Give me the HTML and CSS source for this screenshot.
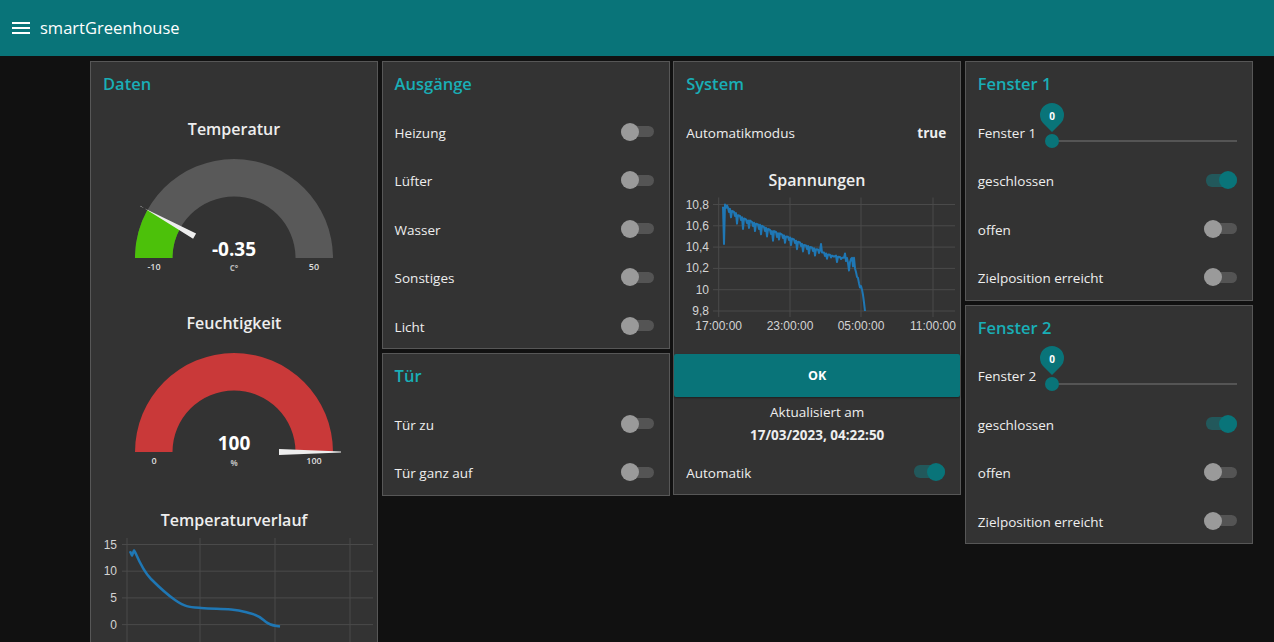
FILE: index.html
```html
<!DOCTYPE html>
<html lang="de">
<head>
<meta charset="utf-8">
<title>smartGreenhouse</title>
<link rel="stylesheet" href="styles.css">
</head>
<body>
<header class="toolbar">
  <svg class="menu-icon" width="24" height="24" viewBox="0 0 24 24"><path d="M3 18h18v-2H3v2zm0-5h18v-2H3v2zm0-7v2h18V6H3z" fill="#fff"/></svg>
  <span class="app-title">smartGreenhouse</span>
</header>
<main class="dashboard">
  <!-- column 1 -->
  <div class="column">
    <section class="card">
      <div class="card-title">Daten</div>
      <svg class="widget-svg" width="286" height="188" viewBox="0 0 286 188">
        <text class="g-title" x="143" y="23">Temperatur</text>
        <path d="M44 146 A99 99 0 0 1 242 146 L204.5 146 A61.5 61.5 0 0 0 81.5 146 Z" fill="#595959"/>
        <path d="M44 146 A99 99 0 0 1 56.4 98 L89.2 116.2 A61.5 61.5 0 0 0 81.5 146 Z" fill="#4cc10a"/>
        <polygon points="49.2,93.8 49.6,94.4 105.1,121.6 102.1,126.8" fill="#eeeeee"/>
        <text class="g-value" x="143" y="144">-0.35</text>
        <text class="g-unit" x="143" y="159">C°</text>
        <text class="g-minmax" x="63" y="158">-10</text>
        <text class="g-minmax" x="223" y="158">50</text>
      </svg>
      <svg class="widget-svg" width="286" height="188" viewBox="0 0 286 188">
        <text class="g-title" x="143" y="23">Feuchtigkeit</text>
        <path d="M44 146 A99 99 0 0 1 242 146 L204.5 146 A61.5 61.5 0 0 0 81.5 146 Z" fill="#c93939"/>
        <polygon points="188,143 250,145.6 250,146.4 188,149" fill="#eeeeee"/>
        <text class="g-value" x="143" y="144">100</text>
        <text class="g-unit" x="143" y="160">%</text>
        <text class="g-minmax" x="63" y="158">0</text>
        <text class="g-minmax" x="223" y="158">100</text>
      </svg>
      <svg class="widget-svg" width="286" height="188" viewBox="0 0 286 188">
        <text class="c-title" x="143" y="26">Temperaturverlauf</text>
        <g class="grid">
          <line x1="31" y1="44.5" x2="282" y2="44.5"/>
          <line x1="31" y1="71.2" x2="282" y2="71.2"/>
          <line x1="31" y1="97.9" x2="282" y2="97.9"/>
          <line x1="31" y1="124.6" x2="282" y2="124.6"/>
          <line x1="36" y1="38" x2="36" y2="188"/>
          <line x1="109" y1="38" x2="109" y2="188"/>
          <line x1="184" y1="38" x2="184" y2="188"/>
          <line x1="259" y1="38" x2="259" y2="188"/>
        </g>
        <g class="axis-y">
          <text x="26" y="48.5">15</text>
          <text x="26" y="75.2">10</text>
          <text x="26" y="101.9">5</text>
          <text x="26" y="128.6">0</text>
        </g>
        <path class="series" d="M39 51.2 L41 55.5 L43 50.5 L44.5 53 C48 61, 53 72, 60 79 S 74 93, 84 100 S 98 107, 110 108 S 130 108.5, 140 109.5 S 152 111.5, 160 113.5 S 170 118, 175 122 S 183 125.5, 189 126.5"/>
      </svg>
    </section>
  </div>

  <!-- column 2 -->
  <div class="column">
    <section class="card">
      <div class="card-title">Ausgänge</div>
      <div class="row"><span>Heizung</span><span class="toggle"></span></div>
      <div class="row"><span>Lüfter</span><span class="toggle"></span></div>
      <div class="row"><span>Wasser</span><span class="toggle"></span></div>
      <div class="row"><span>Sonstiges</span><span class="toggle"></span></div>
      <div class="row"><span>Licht</span><span class="toggle"></span></div>
    </section>
    <section class="card">
      <div class="card-title">Tür</div>
      <div class="row"><span>Tür zu</span><span class="toggle"></span></div>
      <div class="row"><span>Tür ganz auf</span><span class="toggle"></span></div>
    </section>
  </div>

  <!-- column 3 -->
  <div class="column">
    <section class="card">
      <div class="card-title">System</div>
      <div class="row"><span>Automatikmodus</span><span class="value-bold">true</span></div>
      <svg class="widget-svg" width="286" height="188" viewBox="0 0 286 188">
        <text class="c-title" x="143" y="26">Spannungen</text>
        <g class="grid">
          <line x1="39" y1="44.5" x2="281" y2="44.5"/>
          <line x1="39" y1="65.8" x2="281" y2="65.8"/>
          <line x1="39" y1="87.1" x2="281" y2="87.1"/>
          <line x1="39" y1="108.4" x2="281" y2="108.4"/>
          <line x1="39" y1="129.7" x2="281" y2="129.7"/>
          <line x1="39" y1="151" x2="281" y2="151"/>
          <line x1="44.7" y1="37.5" x2="44.7" y2="157"/>
          <line x1="116" y1="37.5" x2="116" y2="157"/>
          <line x1="187" y1="37.5" x2="187" y2="157"/>
          <line x1="259" y1="37.5" x2="259" y2="157"/>
        </g>
        <g class="axis-y">
          <text x="35" y="48.5">10,8</text>
          <text x="35" y="69.8">10,6</text>
          <text x="35" y="91.1">10,4</text>
          <text x="35" y="112.4">10,2</text>
          <text x="35" y="133.7">10</text>
          <text x="35" y="155">9,8</text>
        </g>
        <g class="axis-x">
          <text x="44.7" y="170">17:00:00</text>
          <text x="116" y="170">23:00:00</text>
          <text x="187" y="170">05:00:00</text>
          <text x="259" y="170">11:00:00</text>
        </g>
        <polyline class="series thin" points="49,46.6 50,83.9 51,44.5 52,48 53,45.5 54,47.7 55,52 56,48.9 57,57.3 58,50.9 60,52 61,56 62,53.1 63,63.7 64,55.2 66,56 67,60 68,57.3 69,69 70,58.4 72,59.5 73,63 74,60.5 75,67.9 76,60.5 78,62 79,66 80,62.7 81,71.1 82,63.7 84,64.5 85,69 86,64.8 87,74.3 88,65.8 90,67 91,71 92,67.9 93,76.5 94,69 96,70 97,74 98,71.1 99,80.7 100,71.1 102,72 103,77 104,73.3 105,79.6 106,73.3 108,74.5 109,78 110,75.4 111,82.8 112,76.5 114,76.8 115,80 116,77.5 117,85 118,78.6 120,79.5 121,83 122,80.7 123,89.2 124,81.8 126,82.5 127,86 128,83.9 129,91.4 130,85 132,85.5 133,89 134,86 135,93.5 136,87.1 138,87.5 139,91 140,88.2 141,95.6 142,89.2 144,89.5 145,93 146,90.3 147,83.9 148,92.4 150,92.5 151,96 152,93.5 153,98.8 154,94.6 156,94.8 157,97.5 158,95.6 160,96.7 162,95.6 163,102 164,96.7 166,97 167,99 168,97.8 170,97.8 171,93.5 172,101 173,98 174,103.1 175,110.5 176,102 177,99 178,97.8 179,106.3 180,97.8 181,108.4 182,112 183,116.9 184,118 185,123.3 186,127.6 187,126 188,129.7 189,135 190,142.5 191,151"/>
      </svg>
      <button class="btn" type="button">OK</button>
      <div class="text-block">
        <div>Aktualisiert am</div>
        <div class="bold">17/03/2023, 04:22:50</div>
      </div>
      <div class="row"><span>Automatik</span><span class="toggle on"></span></div>
    </section>
  </div>

  <!-- column 4 -->
  <div class="column">
    <section class="card">
      <div class="card-title">Fenster 1</div>
      <div class="row slider-row">
        <span class="slider-label">Fenster 1</span>
        <div class="slider">
          <span class="slider-thumb"></span>
          <span class="slider-pin"><svg width="26" height="30" viewBox="0 0 26 30"><path d="M13 29 L4.5 20.5 A12 12 0 1 1 21.5 20.5 Z" fill="#097479"/><text x="13" y="17">0</text></svg></span>
        </div>
      </div>
      <div class="row"><span>geschlossen</span><span class="toggle on"></span></div>
      <div class="row"><span>offen</span><span class="toggle"></span></div>
      <div class="row"><span>Zielposition erreicht</span><span class="toggle"></span></div>
    </section>
    <section class="card">
      <div class="card-title">Fenster 2</div>
      <div class="row slider-row">
        <span class="slider-label">Fenster 2</span>
        <div class="slider">
          <span class="slider-thumb"></span>
          <span class="slider-pin"><svg width="26" height="30" viewBox="0 0 26 30"><path d="M13 29 L4.5 20.5 A12 12 0 1 1 21.5 20.5 Z" fill="#097479"/><text x="13" y="17">0</text></svg></span>
        </div>
      </div>
      <div class="row"><span>geschlossen</span><span class="toggle on"></span></div>
      <div class="row"><span>offen</span><span class="toggle"></span></div>
      <div class="row"><span>Zielposition erreicht</span><span class="toggle"></span></div>
    </section>
  </div>
</main>
</body>
</html>
```

FILE: styles.css
```css
html, body {
  margin: 0;
  padding: 0;
}
body {
  background: #111111;
  color: #eeeeee;
  font-family: "Open Sans", "Noto Sans", sans-serif;
  font-size: 13.5px;
}
.toolbar {
  height: 56px;
  background: #097479;
  display: flex;
  align-items: center;
  padding-left: 9px;
  gap: 7px;
  box-sizing: border-box;
}
.menu-icon {
  display: block;
}
.app-title {
  font-size: 16.5px;
  color: #ffffff;
  margin-top: -1px;
}
.dashboard {
  display: grid;
  grid-template-columns: repeat(4, 288px);
  column-gap: 3.6px;
  padding: 5px 0 0 90px;
  align-items: start;
}
.column {
  display: flex;
  flex-direction: column;
  gap: 4px;
}
.card {
  background: #333333;
  border: 1px solid #575757;
  display: flex;
  flex-direction: column;
  gap: 6px;
}
.card-title {
  height: 43.5px;
  display: flex;
  align-items: center;
  padding: 0 12px;
  font-size: 16.5px;
  font-weight: 600;
  color: #19aeb6;
}
.row {
  height: 42.5px;
  display: flex;
  align-items: center;
  justify-content: space-between;
  padding: 0 15px 0 12px;
}
.value-bold {
  font-weight: 700;
  margin-right: -1px;
}
.toggle {
  position: relative;
  width: 33px;
  height: 11px;
  border-radius: 6px;
  background: #545454;
  margin-top: -2px;
}
.toggle::before {
  content: "";
  position: absolute;
  left: 0;
  top: -3.5px;
  width: 18px;
  height: 18px;
  border-radius: 50%;
  background: #9a9a9a;
}
.toggle.on {
  width: 31px;
  height: 13px;
  background: #22585b;
}
.toggle.on::before {
  left: auto;
  right: 0;
  top: -2.5px;
  background: #097479;
}
.widget-svg {
  display: block;
  font-family: "Open Sans", "Noto Sans", sans-serif;
}
.g-title, .c-title {
  fill: #eeeeee;
  font-size: 16px;
  font-weight: 600;
  text-anchor: middle;
}
.g-value {
  fill: #ffffff;
  font-size: 19px;
  font-weight: 700;
  text-anchor: middle;
}
.g-unit {
  fill: #bbbbbb;
  font-size: 8px;
  font-weight: 700;
  text-anchor: middle;
}
.g-minmax {
  fill: #dddddd;
  font-size: 9px;
  font-weight: 600;
  text-anchor: middle;
}
.grid line {
  stroke: #4a4a4a;
  stroke-width: 1;
}
.axis-y text {
  fill: #d4d4d4;
  font-family: "Liberation Sans", Arial, sans-serif;
  font-size: 12px;
  text-anchor: end;
}
.axis-x text {
  fill: #d4d4d4;
  font-family: "Liberation Sans", Arial, sans-serif;
  font-size: 12px;
  text-anchor: middle;
}
.series {
  fill: none;
  stroke: #1f77b4;
  stroke-width: 2.5;
  stroke-linejoin: round;
}
.series.thin {
  stroke-width: 2;
}
.btn {
  height: 43px;
  margin: 0;
  border: none;
  border-radius: 2px;
  background: #097479;
  color: #ffffff;
  font-family: "Open Sans", "Noto Sans", sans-serif;
  font-size: 12.5px;
  font-weight: 700;
  box-shadow: 0 1px 2px rgba(0,0,0,0.4);
}
.text-block {
  height: 42.5px;
  display: flex;
  flex-direction: column;
  align-items: center;
  justify-content: center;
  gap: 4px;
  line-height: 19px;
}
.text-block .bold {
  font-weight: 700;
}
.slider-label {
  flex: 0 0 74px;
}
.slider {
  flex: 1;
  position: relative;
  height: 2px;
  background: #555555;
  margin-top: 16px;
}
.slider-thumb {
  position: absolute;
  left: -7px;
  top: -6px;
  width: 14px;
  height: 14px;
  border-radius: 50%;
  background: #097479;
}
.slider-pin {
  position: absolute;
  left: -13px;
  top: -37px;
  width: 26px;
  height: 30px;
}
.slider-pin svg {
  display: block;
}
.slider-pin text {
  fill: #ffffff;
  font-size: 10px;
  font-weight: 700;
  text-anchor: middle;
}
```
